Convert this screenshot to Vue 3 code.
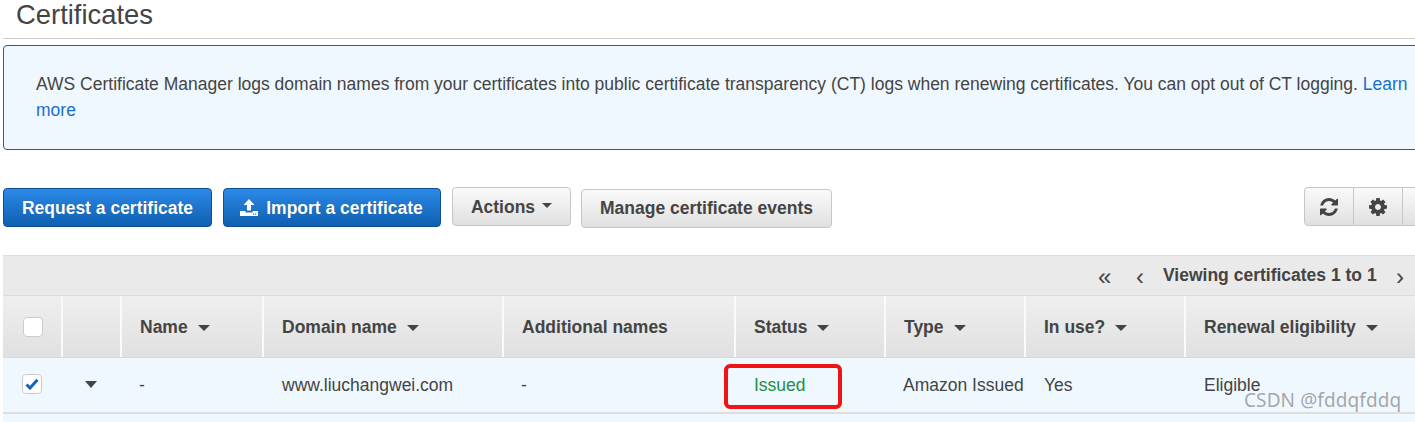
<script setup>
const columns = [
  { label: '', cls: 'check' },
  { label: '', cls: 'expand' },
  { label: 'Name', sort: true },
  { label: 'Domain name', sort: true },
  { label: 'Additional names', sort: false },
  { label: 'Status', sort: true },
  { label: 'Type', sort: true },
  { label: 'In use?', sort: true },
  { label: 'Renewal eligibility', sort: true }
]
</script>

<template>
  <div class="page">
    <h1 class="title">Certificates</h1>
    <div class="banner">
      <p>AWS Certificate Manager logs domain names from your certificates into public certificate transparency (CT) logs when renewing certificates. You can opt out of CT logging. <a>Learn more</a></p>
    </div>

    <div class="toolbar">
      <button class="btn primary req">Request a certificate</button>
      <button class="btn primary imp">
        <svg class="upload" viewBox="0 0 18 17" width="18" height="17">
          <path d="M9 0 L14.500 6 H11 V11.500 H7 V6 H3.500 Z M0 12 H5.500 V13.500 H12.500 V12 H18 V17 H0 Z" fill="#fff" />
          <rect x="13" y="14.500" width="1.200" height="1.200" fill="#2a78c8" />
          <rect x="15" y="14.500" width="1.200" height="1.200" fill="#2a78c8" />
        </svg>
        Import a certificate
      </button>
      <button class="btn plain actions">Actions <span class="caret small"></span></button>
      <button class="btn plain manage">Manage certificate events</button>
      <div class="tools">
        <button class="btn plain tool first">
          <svg viewBox="0 0 1536 1536" width="18" height="18"><path fill="#444" d="M1511 928q0 5-1 7-64 268-268 434.5T764 1536q-146 0-282.500-55T238 1324l-129 129q-19 19-45 19t-45-19-19-45V960q0-26 19-45t45-19h448q26 0 45 19t19 45-19 45l-137 137q71 66 161 102t187 36q134 0 250-65t186-179q11-17 53-117 8-23 30-23h192q13 0 22.500 9.500t9.500 22.500zm25-800v448q0 26-19 45t-45 19h-448q-26 0-45-19t-19-45 19-45l138-138Q969 256 768 256q-134 0-250 65T332 500q-11 17-53 117-8 23-30 23H50q-13 0-22.500-9.500T18 608v-7q65-268 270-434.500T768 0q146 0 284 55.500T1297 212l130-129q19-19 45-19t45 19 19 45z"/></svg>
        </button>
        <button class="btn plain tool">
          <svg viewBox="0 0 1536 1536" width="18" height="18"><path fill="#444" d="M1024 768q0-106-75-181t-181-75-181 75-75 181 75 181 181 75 181-75 75-181zm512-109v222q0 12-8 23t-20 13l-185 28q-19 54-39 91 35 50 107 138 10 12 10 25t-9 23q-27 37-99 108t-94 71q-12 0-26-9l-138-108q-44 23-91 38-16 136-29 186-7 28-36 28H657q-14 0-24.500-8.500T621 1506l-28-184q-49-16-90-37l-141 107q-10 9-25 9-14 0-25-11-126-114-165-168-7-10-7-23 0-12 8-23 15-21 51-66.500t54-70.500q-27-50-41-99L29 913q-13-2-21-12.500T0 877V655q0-12 8-23t19-13l186-28q14-46 39-92-40-57-107-138-10-12-10-24 0-10 9-23 26-36 98.500-107.500T337 135q13 0 26 10l138 107q44-23 91-38 16-136 29-186 7-28 36-28h222q14 0 24.500 8.500T915 30l28 184q49 16 90 37l142-107q9-9 24-9 13 0 25 10 129 119 165 170 7 8 7 22 0 12-8 23-15 21-51 66.500t-54 70.500q26 50 41 98l183 28q13 2 21 12.500t8 23.500z"/></svg>
        </button>
        <button class="btn plain tool last"></button>
      </div>
    </div>

    <div class="grid">
      <div class="pager">
        <span class="pg dbl">«</span>
        <span class="pg sgl">‹</span>
        <span class="viewing">Viewing certificates 1 to 1</span>
        <span class="pg nxt">›</span>
      </div>
      <div class="row head">
        <div v-for="(c, i) in columns" :key="i" class="cell" :class="c.cls">
          <span v-if="c.cls === 'check'" class="box"></span>
          <template v-else-if="c.label">
            {{ c.label }}<span v-if="c.sort" class="caret sort"></span>
          </template>
        </div>
      </div>
      <div class="row body">
        <div class="cell check">
          <span class="box">
            <svg viewBox="0 0 14 12" width="14" height="12"><path d="M1.500 6.500 L5 10 L12.500 1.800" fill="none" stroke="#1166bb" stroke-width="3" /></svg>
          </span>
        </div>
        <div class="cell expand"><span class="caret big"></span></div>
        <div class="cell tight">-</div>
        <div class="cell">www.liuchangwei.com</div>
        <div class="cell tight">-</div>
        <div class="cell issued">Issued</div>
        <div class="cell tight">Amazon Issued</div>
        <div class="cell">Yes</div>
        <div class="cell">Eligible</div>
      </div>
    </div>

    <div class="highlight"></div>
    <div class="watermark">CSDN @fddqfddq</div>
  </div>
</template>

<style>
html, body { margin: 0; overflow: hidden; background: #fff; }
</style>

<style scoped>
.page {
  position: relative;
  width: 1415px;
  height: 422px;
  overflow: hidden;
  padding-left: 3px;
  box-sizing: border-box;
  font-family: "Liberation Sans", Arial, sans-serif;
  color: #444;
  font-size: 17.5px;
}
.title {
  margin: 0;
  height: 37px;
  padding: 1px 0 0 13px;
  font-size: 27.4px;
  font-weight: 400;
  line-height: 28px;
  border-bottom: 1px solid #ccc;
}
.banner {
  box-sizing: border-box;
  width: 1500px;
  height: 105px;
  margin-top: 6px;
  padding: 25px 32px;
  background: #f0f8ff;
  border: 1px solid #1a5fa8;
  border-radius: 4px;
}
.banner p {
  margin: 0;
  width: 1376px;
  line-height: 26px;
}
.banner a { color: #1a6ecb; }
.toolbar {
  display: flex;
  align-items: flex-start;
  margin-top: 37px;
  height: 68px;
  position: relative;
  width: 1500px;
}
.btn {
  box-sizing: border-box;
  height: 39px;
  padding: 1px 0 0;
  border-radius: 4px;
  font-family: inherit;
  font-size: 17.5px;
  font-weight: 700;
  display: flex;
  align-items: center;
  justify-content: center;
}
.primary {
  color: #fff;
  border: 1px solid #0d4f95;
  background: linear-gradient(#2b8ae8, #0f5fb0);
  text-shadow: 0 0 1px rgba(0, 0, 0, .3);
}
.plain {
  color: #444;
  border: 1px solid #c6c6c6;
  background: linear-gradient(#fafafa, #e0e0e0);
}
.req { width: 209px; margin-top: 1px; }
.imp { width: 218px; margin: 1px 0 0 11px; gap: 8px; padding-right: 1px; }
.imp .upload { margin-top: -1px; }
.actions { width: 119px; margin-left: 11px; gap: 7px; }
.manage { width: 251px; margin: 2px 0 0 10px; padding-top: 0; }
.tools { display: flex; margin-left: 472px; }
.tool { width: 49px; border-radius: 0; border-left: 0; padding-top: 0; }
.tool.first { width: 50px; border-left: 1px solid #c6c6c6; border-radius: 4px 0 0 4px; }
.tool.last { width: 60px; }
.caret {
  display: inline-block;
  width: 0;
  height: 0;
  border-left: 5px solid transparent;
  border-right: 5px solid transparent;
  border-top: 5px solid #444;
}
.caret.small { margin-top: -4px; }
.caret.sort { margin-left: 10px; border-left-width: 6px; border-right-width: 6px; border-top-width: 6px; vertical-align: 1px; }
.caret.big { border-left-width: 6px; border-right-width: 6px; border-top-width: 7px; }
.grid { width: 1500px; height: 167px; background: #f0f8ff; }
.pager {
  box-sizing: border-box;
  height: 40px;
  background: #eaeaea;
  border-top: 1px solid #ddd;
  display: flex;
  align-items: center;
  padding: 0 0 1px 1095px;
  font-weight: 700;
}
.pg { font-weight: 400; font-size: 24px; line-height: 24px; color: #444; margin-top: 3px; }
.dbl { width: 38px; }
.sgl { width: 27px; }
.viewing { width: 233px; }
.row {
  display: grid;
  grid-template-columns: 59px 59px 142px 240px 232px 150px 140px 160px 318px;
}
.head {
  height: 63px;
  background: linear-gradient(#efefef, #e0e0e0);
  border-top: 1px solid #dcdcdc;
  border-bottom: 1px solid #d8d8d8;
  box-sizing: border-box;
  font-weight: 700;
}
.head .cell { box-shadow: 1px 0 0 #fafafa, inset -1px 0 0 #fafafa; padding-top: 2px; }
.cell {
  box-sizing: border-box;
  display: flex;
  align-items: center;
  padding-left: 19px;
  white-space: nowrap;
}
.body {
  height: 56px;
  background: #f0f8ff;
  border-bottom: 2px solid #dedede;
  box-sizing: border-box;
  color: #444;
}
.tight { padding-left: 18px; }
.issued { color: #1d8f3f; }
.check, .expand { padding-left: 0; justify-content: center; }
.head .check { padding-top: 0; }
.body .check, .body .expand { padding-right: 2px; padding-bottom: 2px; }
.box {
  box-sizing: border-box;
  width: 20px;
  height: 20px;
  background: #fff;
  border: 1px solid #ccc;
  border-radius: 4px;
  display: flex;
  align-items: center;
  justify-content: center;
}
.highlight {
  position: absolute;
  left: 724px;
  top: 364px;
  width: 118px;
  height: 45px;
  box-sizing: border-box;
  border: 4px solid #f01414;
  border-radius: 6px;
}
.watermark {
  position: absolute;
  left: 1244px;
  top: 389px;
  font-family: "Noto Sans", "DejaVu Sans", sans-serif;
  font-size: 19px;
  line-height: 22px;
  color: rgba(130, 130, 130, .7);
  letter-spacing: .1px;
}
</style>
